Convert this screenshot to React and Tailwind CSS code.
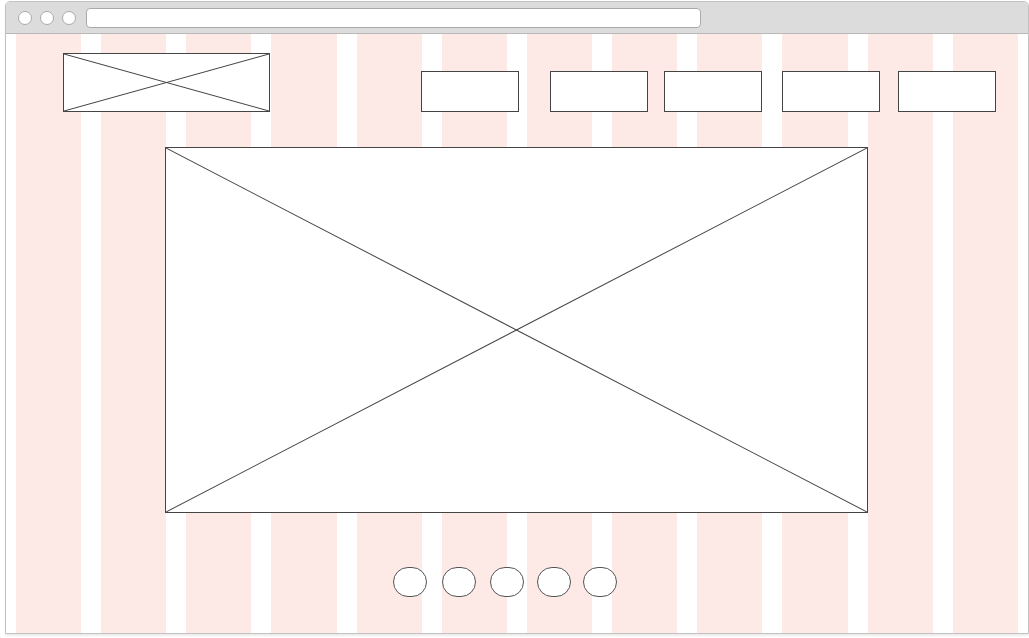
import React from "react";

function CrossBox({ className }) {
  return (
    <div className={`relative bg-white border border-[#444] ${className}`}>
      <svg className="absolute inset-0 w-full h-full" viewBox="0 0 100 100" preserveAspectRatio="none">
        <line x1="0" y1="0" x2="100" y2="100" stroke="#444" strokeWidth="1" vectorEffect="non-scaling-stroke" />
        <line x1="100" y1="0" x2="0" y2="100" stroke="#444" strokeWidth="1" vectorEffect="non-scaling-stroke" />
      </svg>
    </div>
  );
}

function NavBox({ className }) {
  return <div className={`w-[98px] h-[41px] bg-white border border-[#444] shrink-0 ${className}`} />;
}

function Dot({ className }) {
  return <div className={`w-[34px] h-[30px] rounded-full bg-white border border-[#555] shrink-0 ${className}`} />;
}

export default function App() {
  return (
    <div className="w-[1029px] h-[638px] bg-white pt-[1px] pl-[5px]" style={{ fontFamily: '"Liberation Sans", Arial, sans-serif' }}>
      <div className="w-[1024px] h-[633px] flex flex-col border border-[#c2c2c2] rounded-t-[5px] overflow-hidden shadow-[0_2px_2px_rgba(0,0,0,0.08)]">
        {/* browser bar */}
        <div className="h-[32px] shrink-0 bg-[#dcdcdc] border-b border-[#b8b8b8] flex items-center pl-[12px] gap-[8px]">
          <div className="w-[14px] h-[14px] rounded-full bg-white border border-[#aaa]" />
          <div className="w-[14px] h-[14px] rounded-full bg-white border border-[#aaa]" />
          <div className="w-[14px] h-[14px] rounded-full bg-white border border-[#aaa]" />
          <div className="ml-[2px] w-[615px] h-[20px] bg-white border border-[#aaa] rounded-[4px]" />
        </div>

        {/* page */}
        <div className="relative flex-1 bg-white">
          {/* column grid */}
          <div className="absolute inset-0 px-[10px] grid grid-cols-12 gap-x-[20px]">
            {Array.from({ length: 12 }).map((_, i) => (
              <div key={i} className="bg-[#fde9e6]" />
            ))}
          </div>

          <div className="relative flex flex-col">
            {/* header */}
            <div className="flex items-end pt-[19px] pl-[57px]">
              <CrossBox className="w-[207px] h-[59px] shrink-0" />
              <NavBox className="ml-[151px]" />
              <NavBox className="ml-[31px]" />
              <NavBox className="ml-[16px]" />
              <NavBox className="ml-[20px]" />
              <NavBox className="ml-[18px]" />
            </div>

            {/* hero */}
            <CrossBox className="mt-[35px] ml-[159px] w-[703px] h-[366px]" />

            {/* slider dots */}
            <div className="flex mt-[54px] pl-[387px]">
              <Dot />
              <Dot className="ml-[15px]" />
              <Dot className="ml-[14px]" />
              <Dot className="ml-[13px]" />
              <Dot className="ml-[12px]" />
            </div>
          </div>
        </div>
      </div>
    </div>
  );
}
